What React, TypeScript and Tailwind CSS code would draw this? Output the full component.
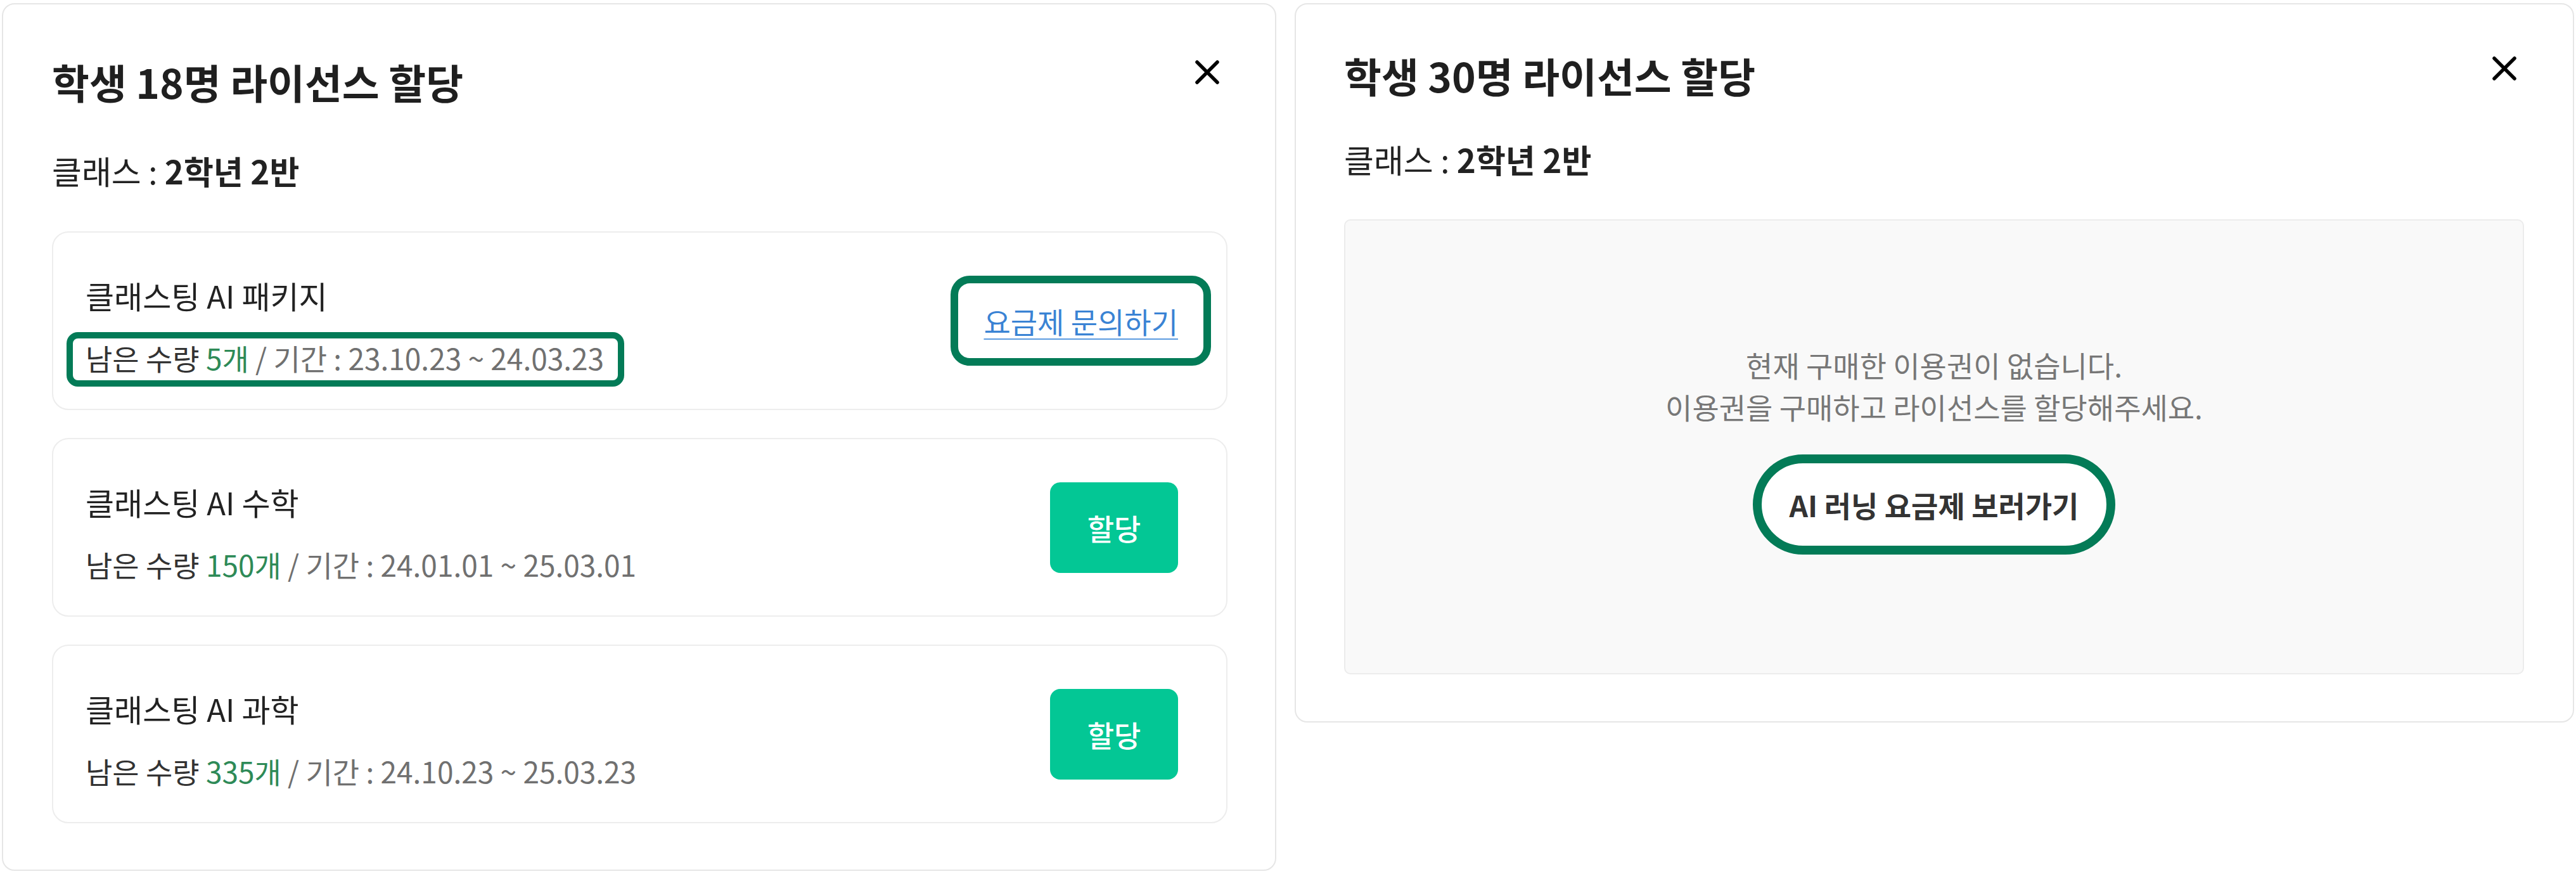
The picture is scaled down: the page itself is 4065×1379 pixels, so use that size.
import { X } from "lucide-react";

const font = "font-['Noto_Sans_CJK_KR','Noto_Sans',sans-serif]";

type License = {
  name: string;
  count: string;
  period: string;
  action: "assign" | "inquiry";
};

const licenses: License[] = [
  { name: "클래스팅 AI 패키지", count: "5개", period: "23.10.23 ~ 24.03.23", action: "inquiry" },
  { name: "클래스팅 AI 수학", count: "150개", period: "24.01.01 ~ 25.03.01", action: "assign" },
  { name: "클래스팅 AI 과학", count: "335개", period: "24.10.23 ~ 25.03.23", action: "assign" },
];

const CloseButton = ({ className }: { className: string }) => (
  <button className={`shrink-0 w-[40px] h-[40px] flex items-center justify-center text-black ${className}`}>
    <svg width="40" height="40" viewBox="0 0 40 40" fill="none">
      <path d="M4 4 L36 36 M36 4 L4 36" stroke="currentColor" strokeWidth="5.5" strokeLinecap="round" />
    </svg>
  </button>
);

const LicenseCard = ({ item, highlight }: { item: License; highlight: boolean }) => (
  <div className="h-[282px] border-2 border-[#ededed] rounded-[26px] pl-[51px] pr-[76px] flex items-center justify-between">
    <div className="flex flex-col pt-[18px] gap-[38px]">
      <p className="text-[49px] leading-[60px] text-[#222]">{item.name}</p>
      <div className="relative self-start">
        <p className="text-[46px] leading-[60px] text-[#333] whitespace-nowrap">
          남은 수량 <span className="text-[#2e8a57]">{item.count}</span>
          <span className="text-[#707070]"> / 기간 : {item.period}</span>
        </p>
        {highlight && (
          <span className="absolute -left-[30px] -right-[32px] -top-[10px] -bottom-[16px] border-[10px] border-[#037b57] rounded-[18px]" />
        )}
      </div>
    </div>
    {item.action === "assign" ? (
      <button className="w-[202px] h-[143px] rounded-[16px] bg-[#03c795] text-white text-[46px] leading-[60px] font-medium">
        할당
      </button>
    ) : (
      <div className="-mr-[52px] border-[12px] border-[#037b57] rounded-[30px] px-[40px] py-[29px]">
        <a className="block text-[46px] leading-[60px] text-[#3a83d4] underline decoration-2 underline-offset-[8px] decoration-[#5c9be0] whitespace-nowrap">
          요금제 문의하기
        </a>
      </div>
    )}
  </div>
);

export default function App() {
  return (
    <div className={`${font} w-[4065px] h-[1379px] bg-white flex items-start gap-[29px] pl-[3px] pt-[5px]`}>
      {/* 이용권 있는 경우 */}
      <div className="w-[2011px] border-2 border-[#e6e6e6] rounded-[20px] bg-white pt-[81px] pl-[77px] pr-[75px] pb-[73px]">
        <div className="flex items-start justify-between">
          <h2 className="text-[64px] leading-[80px] font-bold text-[#1f1f1f]">학생 18명 라이선스 할당</h2>
          <CloseButton className="mt-[6px] mr-[12px]" />
        </div>
        <p className="mt-[71px] text-[51px] leading-[60px] text-[#222]">
          클래스 : <b className="font-bold">2학년 2반</b>
        </p>
        <div className="mt-[66px] flex flex-col gap-[44px]">
          {licenses.map((item, i) => (
            <LicenseCard key={i} item={item} highlight={i === 0} />
          ))}
        </div>
      </div>

      {/* 이용권 없는 경우 */}
      <div className="w-[2019px] border-2 border-[#e6e6e6] rounded-[20px] bg-white pt-[71px] pl-[76px] pr-[77px] pb-[74px]">
        <div className="flex items-start justify-between">
          <h2 className="text-[64px] leading-[80px] font-bold text-[#1f1f1f]">학생 30명 라이선스 할당</h2>
          <CloseButton className="mt-[10px] mr-[11px]" />
        </div>
        <p className="mt-[63px] text-[51px] leading-[60px] text-[#222]">
          클래스 : <b className="font-bold">2학년 2반</b>
        </p>
        <div className="mt-[65px] h-[718px] border-2 border-[#ececec] rounded-[10px] bg-[#f9f9f9] pt-[6px] flex flex-col items-center justify-center">
          <p className="text-[46px] leading-[66px] text-[#777] text-center">
            현재 구매한 이용권이 없습니다.
            <br />
            이용권을 구매하고 라이선스를 할당해주세요.
          </p>
          <button className="mt-[43px] h-[158px] border-[14px] border-[#037b57] rounded-full bg-white px-[44px] text-[46px] leading-[60px] font-semibold text-[#333]">
            AI 러닝 요금제 보러가기
          </button>
        </div>
      </div>
    </div>
  );
}
